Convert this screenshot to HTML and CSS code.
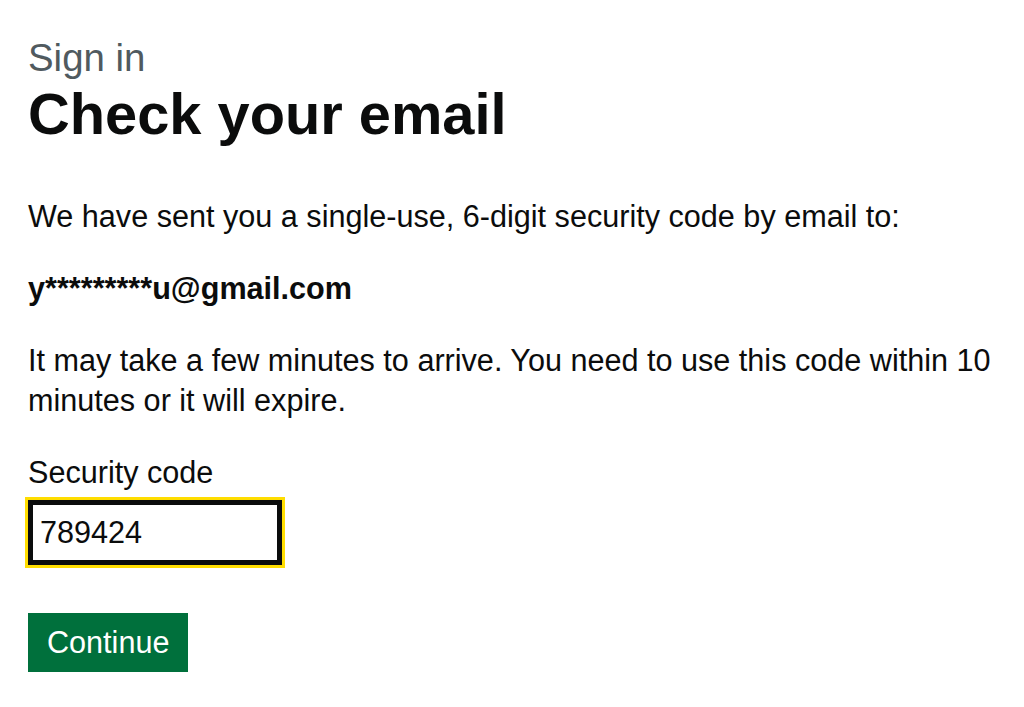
FILE: index.html
```html
<!DOCTYPE html>
<html lang="en">
<head>
<meta charset="utf-8">
<title>Check your email - Sign in</title>
<link rel="stylesheet" href="styles.css">
</head>
<body>
<main class="page">
  <span class="caption">Sign in</span>
  <h1 class="heading">Check your email</h1>
  <p class="body">We have sent you a single-use, 6-digit security code by email to:</p>
  <p class="body email">y*********u@gmail.com</p>
  <p class="body">It may take a few minutes to arrive. You need to use this code within 10 minutes or it will expire.</p>
  <form class="form" action="#">
    <div class="form-group">
      <label class="label" for="code">Security code</label>
      <input class="input is-focused" id="code" name="code" type="text" value="789424">
    </div>
    <button class="button" type="button">Continue</button>
  </form>
</main>
</body>
</html>
```

FILE: styles.css
```css
* { box-sizing: border-box; }

html, body {
  margin: 0;
  background: #ffffff;
}

body {
  font-family: "Liberation Sans", Arial, sans-serif;
  color: #0b0c0c;
}

.page {
  display: flex;
  flex-direction: column;
  align-items: flex-start;
  padding: 34px 10px 0 28px;
}

.caption {
  display: block;
  font-size: 38.4px;
  line-height: 48px;
  color: #505a5f;
}

.heading {
  margin: 0 0 50px;
  font-size: 57.8px;
  line-height: 64px;
  font-weight: 700;
}

.body {
  margin: 0 0 32px;
  font-size: 30.6px;
  line-height: 40px;
}

.email {
  font-weight: 700;
}

.form {
  display: flex;
  flex-direction: column;
  align-items: flex-start;
}

.form-group {
  display: flex;
  flex-direction: column;
  align-items: flex-start;
  margin-bottom: 48px;
}

.label {
  display: block;
  font-size: 30.6px;
  line-height: 40px;
  margin-bottom: 8px;
}

.input {
  width: 254px;
  height: 65px;
  margin: 0;
  padding: 0 7px;
  border: 5px solid #0b0c0c;
  border-radius: 0;
  font-family: "Liberation Sans", Arial, sans-serif;
  font-size: 30.6px;
  color: #0b0c0c;
  background: #ffffff;
}

.input.is-focused {
  outline: 3px solid #ffdd00;
  outline-offset: 0;
}

.button {
  height: 59px;
  padding: 0 19px;
  margin: 0;
  border: 0;
  border-radius: 0;
  background: #00703c;
  color: #ffffff;
  font-family: "Liberation Sans", Arial, sans-serif;
  font-size: 30.6px;
  line-height: 59px;
  box-shadow: 0 3px 0 #002d18;
  cursor: pointer;
}
```
